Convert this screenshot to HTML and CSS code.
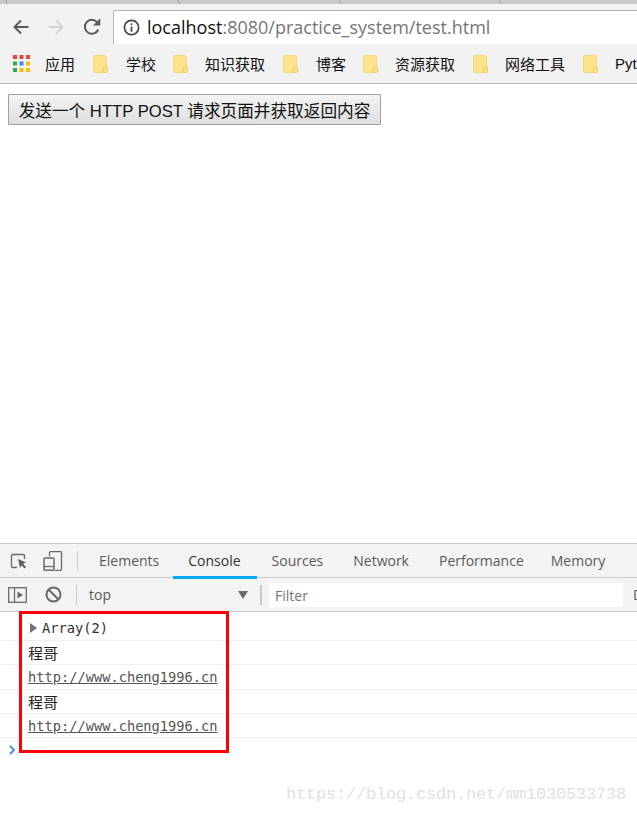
FILE: index.html
```html
<!DOCTYPE html>
<html lang="zh">
<head>
<meta charset="utf-8">
<title>test</title>
<link rel="stylesheet" href="styles.css">
</head>
<body>
<div class="page">
  <div class="tabstrip">
    <svg class="tabcurves" width="637" height="4" viewBox="0 0 637 4"><path d="M6 0l1 4M178 0l2 4M339 0l2 4M499 0l2 4" stroke="#9a9a9a" fill="none"/></svg>
  </div>
  <div class="toolbar">
    <svg class="nav nav-back" width="18" height="18" viewBox="0 0 18 18"><path d="M16.5 9H3M9 2.5L2.5 9 9 15.5" fill="none" stroke="#5a5a5a" stroke-width="2"/></svg>
    <svg class="nav nav-fwd" width="18" height="18" viewBox="0 0 18 18"><path d="M1.5 9H15M9 2.5L15.5 9 9 15.5" fill="none" stroke="#d4d4d4" stroke-width="2"/></svg>
    <svg class="nav nav-reload" width="20" height="20" viewBox="0 0 20 20"><path d="M16.3 12.5A7 7 0 1 1 15 5" fill="none" stroke="#5a5a5a" stroke-width="2"/><path d="M11 8.5h7.3V1.2z" fill="#5a5a5a"/></svg>
    <div class="omnibox">
      <svg class="info" width="17" height="17" viewBox="0 0 16 16"><circle cx="8" cy="8" r="6.7" fill="none" stroke="#444" stroke-width="1.6"/><path d="M7.2 7h1.6v5H7.2zM7.2 4h1.600v1.700H7.200z" fill="#444"/></svg>
      <span class="url"><span class="host">localhost</span>:8080/practice_system/test.html</span>
    </div>
  </div>
  <div class="bookmarks">
    <svg class="apps" width="17" height="17" viewBox="0 0 17 17">
      <rect x="0" y="0" width="4" height="4" fill="#e8453c"/><rect x="6.5" y="0" width="4" height="4" fill="#e8453c"/><rect x="13" y="0" width="4" height="4" fill="#e8453c"/>
      <rect x="0" y="6.5" width="4" height="4" fill="#34a853"/><rect x="6.5" y="6.5" width="4" height="4" fill="#4285f4"/><rect x="13" y="6.5" width="4" height="4" fill="#fbbc05"/>
      <rect x="0" y="13" width="4" height="4" fill="#34a853"/><rect x="6.5" y="13" width="4" height="4" fill="#fbbc05"/><rect x="13" y="13" width="4" height="4" fill="#fbbc05"/>
    </svg>
    <span class="bm bm-apps">应用</span>
    <svg class="folder" width="15" height="18" viewBox="0 0 15 18"><path d="M1.5 0.5h10q2 0 2 2V17.500H1.500q-1 0-1-1V1.500q0-1 1-1z" fill="#fde48b" stroke="#f5d678"/><rect x="10.500" y="12" width="4" height="5.500" rx="1" fill="#fde48b" stroke="#eec95c"/></svg>
    <span class="bm bm-a">学校</span>
    <svg class="folder" width="15" height="18" viewBox="0 0 15 18"><path d="M1.5 0.5h10q2 0 2 2V17.500H1.500q-1 0-1-1V1.500q0-1 1-1z" fill="#fde48b" stroke="#f5d678"/><rect x="10.500" y="12" width="4" height="5.500" rx="1" fill="#fde48b" stroke="#eec95c"/></svg>
    <span class="bm bm-b">知识获取</span>
    <svg class="folder" width="15" height="18" viewBox="0 0 15 18"><path d="M1.5 0.5h10q2 0 2 2V17.500H1.500q-1 0-1-1V1.500q0-1 1-1z" fill="#fde48b" stroke="#f5d678"/><rect x="10.500" y="12" width="4" height="5.500" rx="1" fill="#fde48b" stroke="#eec95c"/></svg>
    <span class="bm bm-c">博客</span>
    <svg class="folder" width="15" height="18" viewBox="0 0 15 18"><path d="M1.5 0.5h10q2 0 2 2V17.500H1.500q-1 0-1-1V1.500q0-1 1-1z" fill="#fde48b" stroke="#f5d678"/><rect x="10.500" y="12" width="4" height="5.500" rx="1" fill="#fde48b" stroke="#eec95c"/></svg>
    <span class="bm bm-d">资源获取</span>
    <svg class="folder" width="15" height="18" viewBox="0 0 15 18"><path d="M1.5 0.5h10q2 0 2 2V17.500H1.500q-1 0-1-1V1.500q0-1 1-1z" fill="#fde48b" stroke="#f5d678"/><rect x="10.500" y="12" width="4" height="5.500" rx="1" fill="#fde48b" stroke="#eec95c"/></svg>
    <span class="bm bm-e">网络工具</span>
    <svg class="folder" width="15" height="18" viewBox="0 0 15 18"><path d="M1.5 0.5h10q2 0 2 2V17.500H1.500q-1 0-1-1V1.500q0-1 1-1z" fill="#fde48b" stroke="#f5d678"/><rect x="10.500" y="12" width="4" height="5.500" rx="1" fill="#fde48b" stroke="#eec95c"/></svg>
    <span class="bm bm-f">Pyt</span>
  </div>
  <main class="content">
    <button class="action" type="button">发送一个 HTTP POST 请求页面并获取返回内容</button>
  </main>
  <section class="devtools">
    <div class="dt-tabs">
      <svg class="dt-inspect" width="18" height="18" viewBox="0 0 18 18"><path d="M7 15.500H2.500q-1 0-1-1V3.500q0-1 1-1h11q1 0 1 1V7" fill="none" stroke="#6a6a6a" stroke-width="1.300"/><path d="M8 7l8 3.500-3 1.200 3 3.300-1.500 1.500-3-3.300L10 16z" fill="#5f5f5f"/></svg>
      <svg class="dt-device" width="20" height="20" viewBox="0 0 20 20"><path d="M6.500 5.500V1.500q0-.8.8-.8h10.400q.8 0 .8.800v17q0 .8-.8.800H12" fill="none" stroke="#6a6a6a" stroke-width="1.300"/><rect x="1" y="7" width="10" height="12.300" rx="1" fill="none" stroke="#6a6a6a" stroke-width="1.500"/><path d="M1 15.500h10" stroke="#6a6a6a" stroke-width="1.300"/></svg>
      <span class="dt-sep"></span>
      <span class="dt-tab dt-elements">Elements</span>
      <span class="dt-tab dt-console">Console</span>
      <span class="dt-tab dt-sources">Sources</span>
      <span class="dt-tab dt-network">Network</span>
      <span class="dt-tab dt-perf">Performance</span>
      <span class="dt-tab dt-memory">Memory</span>
    </div>
    <div class="dt-bar">
      <svg class="dt-sidebar" width="19" height="16" viewBox="0 0 19 16"><rect x=".7" y=".7" width="17.600" height="14.600" fill="none" stroke="#6a6a6a" stroke-width="1.300"/><path d="M6.500 .7v14.600" stroke="#6a6a6a" stroke-width="1.300"/><path d="M9.500 4.500L15 8l-5.500 3.500z" fill="#6a6a6a"/></svg>
      <svg class="dt-clear" width="17" height="17" viewBox="0 0 17 17"><circle cx="8.500" cy="8.500" r="7" fill="none" stroke="#6a6a6a" stroke-width="2"/><path d="M3.500 3.500l10 10" stroke="#6a6a6a" stroke-width="2"/></svg>
      <span class="dt-sep dt-sep-bar"></span>
      <span class="dt-context">top</span>
      <svg class="dt-caret" width="10" height="8" viewBox="0 0 10 8"><path d="M0 0h10L5 8z" fill="#6a6a6a"/></svg>
      <span class="dt-sep dt-sep-filter"></span>
      <div class="dt-filter">Filter</div>
      <span class="dt-more">D</span>
    </div>
    <div class="log">
      <div class="row row-array"><svg class="tri" width="7" height="10" viewBox="0 0 7 10"><path d="M0 0l7 5-7 5z" fill="#727272"/></svg><span class="mono array">Array(2)</span></div>
      <div class="row"><span class="cjk">程哥</span></div>
      <div class="row"><span class="mono link">http://www.cheng1996.cn</span></div>
      <div class="row"><span class="cjk">程哥</span></div>
      <div class="row"><span class="mono link">http://www.cheng1996.cn</span></div>
      <div class="prompt"><svg width="7" height="10" viewBox="0 0 7 10"><path d="M1 1l4 4-4 4" fill="none" stroke="#3f86f5" stroke-width="1.800"/></svg></div>
    </div>
    <div class="highlight"></div>
    <div class="watermark">https://blog.csdn.net/mm1030533738</div>
  </section>
</div>
</body>
</html>
```

FILE: styles.css
```css
* { box-sizing: border-box; }
html, body { margin: 0; padding: 0; background: #fff; }
body { font-family: "Liberation Sans", "Noto Sans CJK SC", sans-serif; }
.page { width: 637px; height: 815px; display: flex; flex-direction: column; overflow: hidden; }

.tabstrip { height: 4px; background: #c9c9c9; flex: none; }
.tabcurves { display: block; }
.toolbar { height: 40px; background: #f2f2f2; display: flex; align-items: center; flex: none; padding-top: 6px; padding-left: 12px; }
.nav { flex: none; }
.nav-fwd { margin-left: 17px; }
.nav-reload { margin-left: 17px; }
.omnibox { margin-left: 11px; flex: 1; height: 35px; background: #fff; border: 1px solid #b4b4b4; border-right: 0; border-radius: 2px 0 0 2px; display: flex; align-items: center; padding-left: 9px; min-width: 0; }
.info { flex: none; }
.url { margin-left: 7px; font-family: "Open Sans", "Liberation Sans", sans-serif; font-size: 18px; color: #767676; white-space: nowrap; }
.host { color: #111; }

.bookmarks { height: 40px; background: #f2f2f2; border-bottom: 1px solid #b8b8b8; display: flex; align-items: center; flex: none; padding-left: 13px; font-size: 15px; color: #111; white-space: nowrap; overflow: hidden; }
.apps, .folder { flex: none; }
.bm { flex: none; }
.bm-apps { margin-left: 15px; margin-right: 18px; }
.bm-a { margin-left: 18px; margin-right: 17px; }
.bm-b { margin-left: 17px; margin-right: 18px; }
.bm-c { margin-left: 18px; margin-right: 17px; }
.bm-d { margin-left: 17px; margin-right: 18px; }
.bm-e { margin-left: 17px; margin-right: 18px; }
.bm-f { margin-left: 17px; }

.content { flex: 1; padding: 10px 8px; min-height: 0; background: #fff; }
.action { display: block; width: 373px; height: 31px; padding: 0; font-family: "Liberation Sans", "Noto Sans CJK SC", sans-serif; font-size: 16.650px; color: #111; border: 1px solid #a0a0a0; border-radius: 1px; background: linear-gradient(#f4f4f4, #dedede); white-space: nowrap; }

.devtools { flex: none; height: 272px; position: relative; background: #fff; font-family: "Open Sans", "Liberation Sans", sans-serif; }
.dt-tabs { height: 35px; background: #f3f3f3; border-top: 1px solid #cbcbcb; border-bottom: 1px solid #cbcbcb; display: flex; align-items: center; padding-left: 10px; font-size: 14px; color: #5a5a5a; position: relative; }
.dt-inspect { flex: none; }
.dt-device { flex: none; margin-left: 15px; }
.dt-sep { flex: none; width: 1px; height: 20px; background: #cccccc; }
.dt-tabs .dt-sep { margin-left: 14px; }
.dt-tab { flex: none; white-space: nowrap; }
.dt-elements { margin-left: 21px; }
.dt-console { margin-left: 29px; color: #333; position: relative; }
.dt-console::after { content: ""; position: absolute; left: -15px; right: -16px; bottom: -9px; height: 3px; background: #03a9f4; }
.dt-sources { margin-left: 31px; }
.dt-network { margin-left: 30px; }
.dt-perf { margin-left: 30px; }
.dt-memory { margin-left: 27px; }

.dt-bar { height: 34px; background: #f3f3f3; border-bottom: 1px solid #cbcbcb; display: flex; align-items: center; padding-left: 8px; font-size: 14px; color: #5a5a5a; white-space: nowrap; overflow: hidden; }
.dt-sidebar, .dt-clear, .dt-caret { flex: none; }
.dt-clear { margin-left: 18px; }
.dt-sep-bar { margin-left: 14px; }
.dt-context { margin-left: 12px; width: 148px; flex: none; }
.dt-caret { margin-left: 1px; }
.dt-sep-filter { margin-left: 12px; width: 2px; background: #c8c8c8; }
.dt-filter { margin-left: 7px; width: 354px; flex: none; height: 24px; line-height: 25px; background: #fff; padding-left: 6px; color: #757575; }
.dt-more { margin-left: 10px; flex: none; }

.log { background: #fff; }
.row { height: 24.300px; border-bottom: 1px solid #efefef; padding-left: 28px; display: flex; align-items: center; font-family: "DejaVu Sans Mono", "Noto Sans CJK SC", monospace; font-size: 13.700px; color: #303030; white-space: nowrap; }
.row-array { height: 29px; padding-left: 30px; padding-top: 3px; }
.mono { display: inline-block; }
.cjk { font-family: "Noto Sans CJK SC", sans-serif; font-size: 15px; color: #222; }
.array { margin-left: 5px; }
.tri { flex: none; }
.link { color: #555; text-decoration: underline; }
.prompt { padding: 7px 0 0 9px; height: 20px; }
.prompt svg { display: block; }

.highlight { position: absolute; left: 19px; top: 68px; width: 210px; height: 142px; border: 3px solid #fb0007; }
.watermark { position: absolute; left: 286px; top: 242px; font-family: "Liberation Mono", monospace; font-size: 17px; letter-spacing: -.2px; color: #e2e1dc; white-space: nowrap; }
```
